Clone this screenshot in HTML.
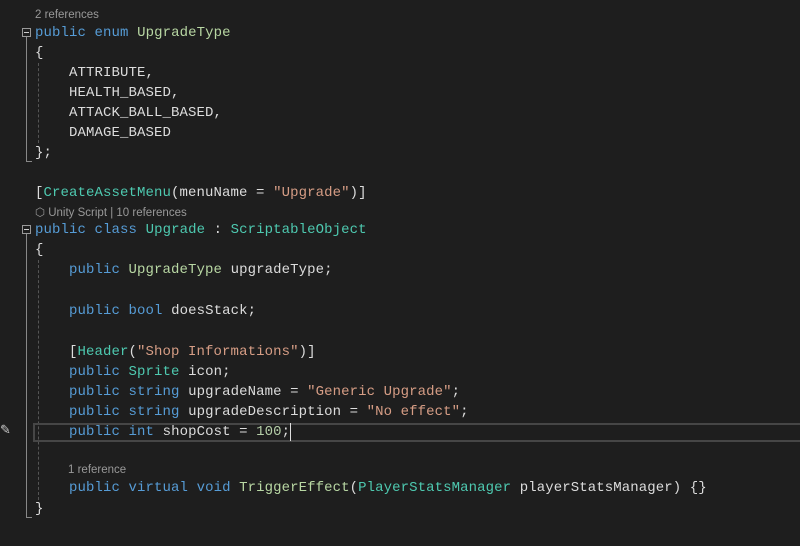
<!DOCTYPE html>
<html><head><style>
body{margin:0;width:800px;height:546px;background:#1e1e1e;overflow:hidden;position:relative;font-family:"Liberation Mono",monospace;}
.l{position:absolute;left:35px;height:20px;line-height:20px;font-size:14px;letter-spacing:0.1px;color:#dcdcdc;white-space:pre;margin-top:1px}
.c{position:absolute;font-family:"Liberation Sans",sans-serif;font-size:11.5px;color:#999;white-space:pre;height:14px;line-height:14px;}
.k{color:#569cd6}.t{color:#4ec9b0}.e{color:#b8d7a3}.s{color:#d69d85}.n{color:#b5cea8}
.box{position:absolute;left:22px;width:9px;height:9px;border:1px solid #999;box-sizing:border-box}
.box:after{content:"";position:absolute;left:1px;top:3px;width:5px;height:1px;background:#ccc}
.v{position:absolute;left:26px;width:1px;background:#888}
.h{position:absolute;left:26px;width:6px;height:1px;background:#888}
.d{position:absolute;left:38px;width:0;border-left:1px dashed #555}
</style></head><body>
<div class="c" style="left:35px;top:8px">2 references</div>
<div class="box" style="top:28px"></div>
<div class="v" style="top:37px;height:124px"></div><div class="h" style="top:161px"></div>
<div class="d" style="top:63px;height:80px"></div>
<div class="l" style="top:22px"><span class="k">public</span> <span class="k">enum</span> <span class="e">UpgradeType</span></div>
<div class="l" style="top:42px">{</div>
<div class="l" style="top:62px">    ATTRIBUTE,</div>
<div class="l" style="top:82px">    HEALTH_BASED,</div>
<div class="l" style="top:102px">    ATTACK_BALL_BASED,</div>
<div class="l" style="top:122px">    DAMAGE_BASED</div>
<div class="l" style="top:142px">};</div>
<div class="l" style="top:182px">[<span class="t">CreateAssetMenu</span>(menuName = <span class="s">"Upgrade"</span>)]</div>
<div class="c" style="left:35px;top:206px">⬡ Unity Script | 10 references</div>
<div class="box" style="top:225px"></div>
<div class="v" style="top:234px;height:283px"></div><div class="h" style="top:517px"></div>
<div class="d" style="top:260px;height:240px"></div>
<div class="l" style="top:219px"><span class="k">public</span> <span class="k">class</span> <span class="t">Upgrade</span> : <span class="t">ScriptableObject</span></div>
<div class="l" style="top:239px">{</div>
<div class="l" style="top:259px">    <span class="k">public</span> <span class="e">UpgradeType</span> upgradeType;</div>
<div class="l" style="top:300px">    <span class="k">public</span> <span class="k">bool</span> doesStack;</div>
<div class="l" style="top:341px">    [<span class="t">Header</span>(<span class="s">"Shop Informations"</span>)]</div>
<div class="l" style="top:361px">    <span class="k">public</span> <span class="t">Sprite</span> icon;</div>
<div class="l" style="top:381px">    <span class="k">public</span> <span class="k">string</span> upgradeName = <span class="s">"Generic Upgrade"</span>;</div>
<div class="l" style="top:401px">    <span class="k">public</span> <span class="k">string</span> upgradeDescription = <span class="s">"No effect"</span>;</div>
<div style="position:absolute;left:33px;top:423px;width:770px;height:19px;border:2px solid #464646;box-sizing:border-box"></div>
<div class="l" style="top:421px">    <span class="k">public</span> <span class="k">int</span> shopCost = <span class="n">100</span>;</div>
<div style="position:absolute;left:290px;top:423px;width:1px;height:18px;background:#ddd"></div>
<div style="position:absolute;left:0;top:423px;color:#ccc;font-size:13px;font-family:'DejaVu Sans',sans-serif">✎</div>
<div class="c" style="left:68px;top:463px">1 reference</div>
<div class="l" style="top:477px">    <span class="k">public</span> <span class="k">virtual</span> <span class="k">void</span> <span class="e">TriggerEffect</span>(<span class="t">PlayerStatsManager</span> playerStatsManager) {}</div>
<div class="l" style="top:498px">}</div>
</body></html>
